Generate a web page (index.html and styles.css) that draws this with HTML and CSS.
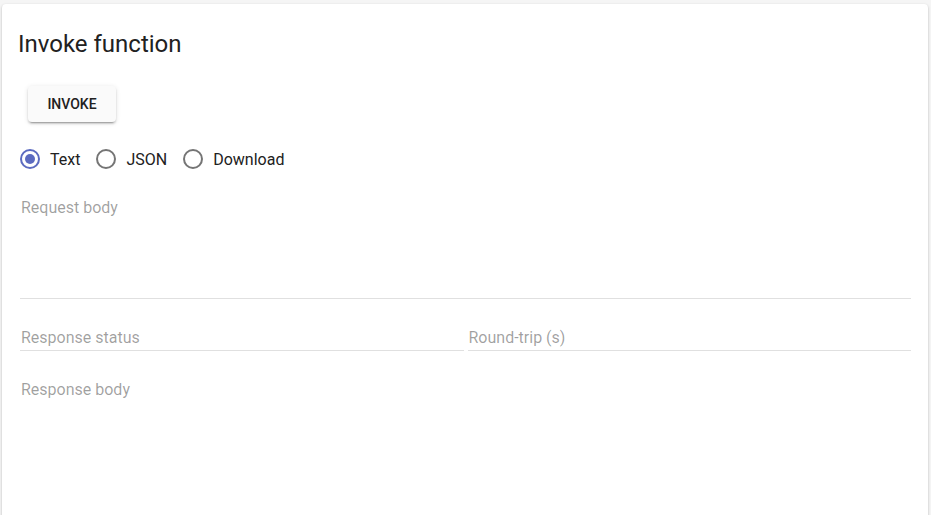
FILE: index.html
```html
<!DOCTYPE html>
<html>
<head>
<meta charset="utf-8">
<link rel="stylesheet" href="styles.css">
</head>
<body>
<div class="card">
  <h2 class="title">Invoke function</h2>
  <div class="actions">
    <button class="btn">INVOKE</button>
  </div>
  <div class="radios">
    <label class="radio checked"><span class="circle"><span class="dot"></span></span><span class="rlabel">Text</span></label>
    <label class="radio"><span class="circle"></span><span class="rlabel">JSON</span></label>
    <label class="radio"><span class="circle"></span><span class="rlabel">Download</span></label>
  </div>
  <div class="field request">
    <span class="flabel">Request body</span>
  </div>
  <div class="row">
    <div class="field short"><span class="flabel">Response status</span></div>
    <div class="field short"><span class="flabel">Round-trip (s)</span></div>
  </div>
  <div class="field response">
    <span class="flabel">Response body</span>
  </div>
</div>
</body>
</html>
```
FILE: styles.css
```css
html, body {
  margin: 0;
  padding: 0;
  background: #f5f5f5;
  font-family: Roboto, "Liberation Sans", sans-serif;
  height: 515px;
  overflow: hidden;
}
.card {
  margin: 4px 3px 0 2px;
  background: #fff;
  border-radius: 4px;
  box-shadow: 0 1px 3px rgba(0,0,0,0.2), 0 1px 1px rgba(0,0,0,0.14), 0 2px 1px -1px rgba(0,0,0,0.12);
  padding: 16px 16px 0 16px;
  height: 600px;
}
.title {
  margin: 8px 0 0 0;
  font-size: 24px;
  font-weight: 400;
  line-height: 32px;
  color: #212121;
}
.actions {
  margin: 26px 0 0 10px;
}
.btn {
  width: 88px;
  height: 36px;
  border: none;
  border-radius: 4px;
  background: #fafafa;
  box-shadow: 0 3px 1px -2px rgba(0,0,0,0.2), 0 2px 2px 0 rgba(0,0,0,0.14), 0 1px 5px 0 rgba(0,0,0,0.12);
  font-family: Roboto, "Liberation Sans", sans-serif;
  font-size: 14px;
  font-weight: 500;
  letter-spacing: 0;
  color: #212121;
  padding: 0;
}
.radios {
  display: flex;
  align-items: center;
  margin: 17px 0 0 2px;
  height: 40px;
}
.radio {
  display: flex;
  align-items: center;
  margin-right: 16px;
}
.circle {
  box-sizing: border-box;
  width: 20px;
  height: 20px;
  border: 2px solid #757575;
  border-radius: 50%;
  display: flex;
  align-items: center;
  justify-content: center;
}
.checked .circle {
  border-color: #5c6bc0;
}
.dot {
  width: 10px;
  height: 10px;
  border-radius: 50%;
  background: #5c6bc0;
}
.rlabel {
  margin-left: 10px;
  font-size: 16px;
  color: #212121;
}
.field {
  border-bottom: 1px solid #e0e0e0;
  margin-left: 2px;
  margin-right: 1px;
  padding-left: 1px;
}
.flabel {
  font-size: 16px;
  color: rgba(0,0,0,0.38);
  line-height: 20px;
  display: block;
}
.request {
  margin-top: 19px;
  height: 100px;
  padding-top: 0;
}
.row {
  display: flex;
  gap: 4px;
  margin-left: 2px;
  margin-right: 1px;
  margin-top: 29px;
}
.row .field {
  flex: 1;
  margin: 0;
  height: 22px;
}
.response {
  margin-top: 29px;
  height: 120px;
  border-bottom: none;
}
```
